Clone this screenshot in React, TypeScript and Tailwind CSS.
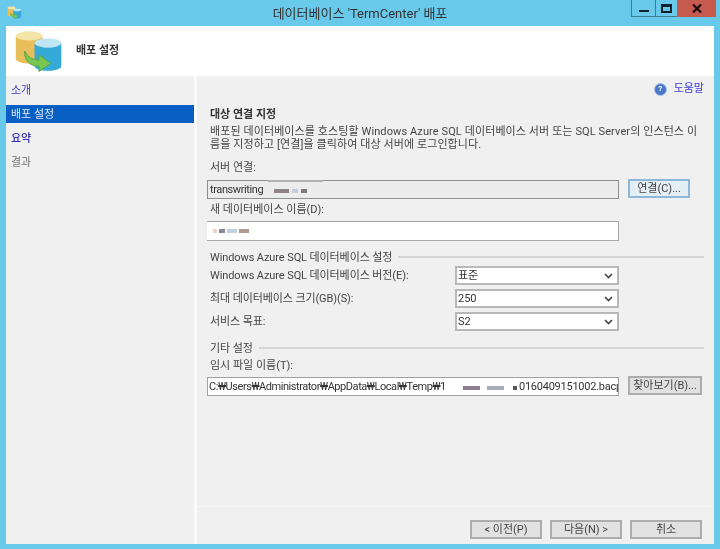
import React from 'react';

const font = { fontFamily: 'Roboto, "Noto Sans CJK KR", sans-serif' };

const DbIcon = ({ size }: { size: number }) => (
  <svg width={size} height={size} viewBox="0 0 56 48">
    <ellipse cx="17" cy="7" rx="15" ry="5" fill="#f5e4a8" />
    <path d="M2 7v26c0 3 7 5 15 5s15-2 15-5V7c0 3-7 5-15 5S2 10 2 7z" fill="#e8bf5a" />
    <ellipse cx="38" cy="15" rx="15" ry="5" fill="#bfe6f5" />
    <path d="M23 15v26c0 3 7 5 15 5s15-2 15-5V15c0 3-7 5-15 5s-15-2-15-5z" fill="#35a9d8" />
    <path d="M12 24c3 7 9 10 16 10v-6l13 10-13 9v-6c-10 0-17-6-16-17z" fill="#7ac74f" stroke="#4da53a" strokeWidth="1" />
  </svg>
);

const Chevron = () => (
  <svg width="9" height="6" viewBox="0 0 9 6" className="shrink-0">
    <path d="M1 1l3.5 3.5L8 1" fill="none" stroke="#444" strokeWidth="1.6" />
  </svg>
);

const Select = ({ value }: { value: string }) => (
  <div className="flex items-center justify-between w-[164px] h-[19px] bg-white border-2 border-[#b8b8b8] pl-[1px] pr-[4px] text-[#333]">
    <span className="pt-[1px]">{value}</span>
    <Chevron />
  </div>
);

const Button = ({ children, w }: { children: React.ReactNode; w: string }) => (
  <div className={`flex items-center justify-center h-[19px] pt-[1px] ${w} bg-[#e1e1e1] border-2 border-[#adadad] text-[#444]`}>
    {children}
  </div>
);

const Smudge = ({ w, c }: { w: string; c: string }) => <span className={`inline-block h-[4px] ${w} ${c}`} />;

const Legend = ({ title }: { title: string }) => (
  <div className="flex items-center gap-[6px] h-[14px] pl-[3px] pr-[10px]">
    <span className="text-[#444] whitespace-nowrap pt-[1px] tracking-[-0.1px]">{title}</span>
    <div className="flex-1 h-[2px] bg-[#d4d4d4]" />
  </div>
);

const SelectRow = ({ label, value }: { label: string; value: string }) => (
  <div className="flex items-center h-[23px] pl-[3px]">
    <span className="w-[245px] text-[#444] pt-[1px] tracking-[-0.1px]">{label}</span>
    <Select value={value} />
  </div>
);

export default function App() {
  return (
    <div style={font} className="w-[720px] h-[549px] bg-[#69c9ea] flex flex-col overflow-hidden text-[11px] leading-[14px] blur-[0.4px]">
      {/* title bar */}
      <div className="relative h-[26px] shrink-0 flex items-center justify-center">
        <div className="absolute left-[7px] top-[5px]"><DbIcon size={15} /></div>
        <span className="text-[13px] text-[#333] pt-[1px]">데이터베이스 'TermCenter' 배포</span>
        <div className="absolute right-[4px] top-0 flex h-[17px]">
          <div className="w-[24px] border-l border-b border-[#3b7f96] flex items-center justify-center">
            <div className="w-[10px] h-[2px] bg-[#10202c] mt-[5px]" />
          </div>
          <div className="w-[22px] border-l border-b border-[#3b7f96] flex items-center justify-center">
            <div className="w-[11px] h-[9px] border-2 border-t-[3px] border-[#10202c]" />
          </div>
          <div className="w-[39px] bg-[#c75a4f] flex items-center justify-center">
            <svg width="10" height="9" viewBox="0 0 10 9"><path d="M1 0.5l8 8M9 0.5l-8 8" stroke="#1c0d0b" strokeWidth="2.2" /></svg>
          </div>
        </div>
      </div>

      {/* window body */}
      <div className="flex-1 mx-[6px] mb-[5px] flex flex-col bg-[#f0f0f0] min-h-0">
        <div className="h-[50px] shrink-0 bg-white flex items-center">
          <div className="ml-[8px] w-[56px] flex items-center"><DbIcon size={50} /></div>
          <span className="ml-[6px] font-bold text-[#333]">배포 설정</span>
        </div>

        <div className="flex-1 flex min-h-0">
          {/* sidebar */}
          <div className="w-[188px] shrink-0 pt-[3px] text-[#4a4a4a]">
            <div className="h-[22px] pl-[5px] pt-[5px] text-[#3c3cc8]">소개</div>
            <div className="mt-[4px] h-[18px] pl-[5px] pt-[1px] flex items-center bg-[#0a5fc4] text-[#dfe8f5]">배포 설정</div>
            <div className="h-[30px] pl-[5px] pt-[1px] flex items-center text-[#3030c0] font-medium">요약</div>
            <div className="h-[18px] pl-[5px] pt-[1px] flex items-center text-[#777]">결과</div>
          </div>
          <div className="w-[3px] shrink-0 bg-[#fafafa]" />

          {/* content */}
          <div className="flex-1 flex flex-col min-w-0 pl-[10px]">
            <div className="flex justify-end items-center gap-[7px] h-[14px] mt-[6px] pr-[10px] text-[#3c3cc8]">
              <div className="w-[13px] h-[13px] rounded-full bg-[#4b78c8] border border-[#a9c0e6] flex items-center justify-center text-[8px] leading-none font-bold text-white">?</div>
              <span>도움말</span>
            </div>

            <div className="mt-[12px] pl-[3px] font-bold text-[#333] h-[14px]">대상 연결 지정</div>
            <div className="mt-[3px] pl-[3px] text-[#444] leading-[13px] whitespace-nowrap overflow-hidden tracking-[0.1px]">
              <div>배포된 데이터베이스를 호스팅할 Windows Azure SQL 데이터베이스 서버 또는 SQL Server의 인스턴스 이</div>
              <div>름을 지정하고 [연결]을 클릭하여 대상 서버에 로그인합니다.</div>
            </div>

            <div className="mt-[10px] pl-[3px] h-[14px] text-[#444]">서버 연결:</div>
            <div className="mt-[5px] flex items-start gap-[9px]">
              <div className="relative w-[412px] h-[19px] bg-[#ececec] border border-[#8f8f8f] pl-[2px] flex items-center gap-[2px] text-[#333]">
                <span className="tracking-[-0.4px]">transwriting</span>
                <span className="ml-[9px] flex gap-[3px] mt-[3px]">
                  <Smudge w="w-[15px]" c="bg-[#8e8488]" />
                  <Smudge w="w-[6px]" c="bg-[#c4ccd6]" />
                  <Smudge w="w-[6px]" c="bg-[#807a78]" />
                </span>
                <div className="absolute left-[60px] -top-[1px] w-[55px] h-[2px] bg-[#b0b0b0]" />
              </div>
              <div className="-mt-[1px]">
                <div className="flex items-center justify-center w-[62px] h-[19px] pt-[1px] bg-[#e4eef5] border-2 border-[#8cb8d8] text-[#444]">연결(C)...</div>
              </div>
            </div>

            <div className="mt-[4px] pl-[3px] h-[14px] text-[#444]">새 데이터베이스 이름(D):</div>
            <div className="mt-[4px] w-[412px] h-[20px] bg-white border-y border-[#a9a9a9] border-r pl-[6px] flex items-center gap-[2px]">
              <Smudge w="w-[4px]" c="bg-[#e6d8c8]" />
              <Smudge w="w-[6px]" c="bg-[#8a8494]" />
              <Smudge w="w-[10px]" c="bg-[#c0d0dc]" />
              <Smudge w="w-[10px]" c="bg-[#b09a90]" />
            </div>

            <div className="mt-[9px]"><Legend title="Windows Azure SQL 데이터베이스 설정" /></div>
            <div>
              <SelectRow label="Windows Azure SQL 데이터베이스 버전(E):" value="표준" />
              <SelectRow label="최대 데이터베이스 크기(GB)(S):" value="250" />
              <SelectRow label="서비스 목표:" value="S2" />
            </div>

            <div className="mt-[8px]"><Legend title="기타 설정" /></div>
            <div className="mt-[4px] pl-[3px] h-[14px] text-[#444]">임시 파일 이름(T):</div>
            <div className="mt-[4px] flex items-start gap-[9px]">
              <div className="w-[412px] h-[19px] bg-white border border-[#a0a0a0] pl-[1px] flex items-center text-[#333] whitespace-nowrap overflow-hidden">
                <span className="w-[239px] shrink-0 tracking-[-0.45px]">C:₩Users₩Administrator₩AppData₩Local₩Temp₩1</span>
                <span className="w-[71px] shrink-0 flex items-end pl-[15px] mt-[2px]">
                  <Smudge w="w-[17px]" c="bg-[#8e8090]" />
                  <Smudge w="w-[17px] ml-[7px]" c="bg-[#a8aeb8]" />
                  <Smudge w="w-[4px] ml-[9px]" c="bg-[#555]" />
                </span>
                <span className="tracking-[-0.25px]">0160409151002.bacp</span>
              </div>
              <div className="-mt-[1px]">
                <Button w="w-[74px]">찾아보기(B)...</Button>
              </div>
            </div>

            <div className="flex-1" />
            <div className="h-[1px] bg-[#f7f7f7] -ml-[10px]" />
            <div className="h-[37px] shrink-0 flex justify-end gap-[8px] pt-[13px] pr-[12px]">
              <Button w="w-[72px]">&lt; 이전(P)</Button>
              <Button w="w-[72px]">다음(N) &gt;</Button>
              <Button w="w-[72px]">취소</Button>
            </div>
          </div>
        </div>
      </div>
    </div>
  );
}
